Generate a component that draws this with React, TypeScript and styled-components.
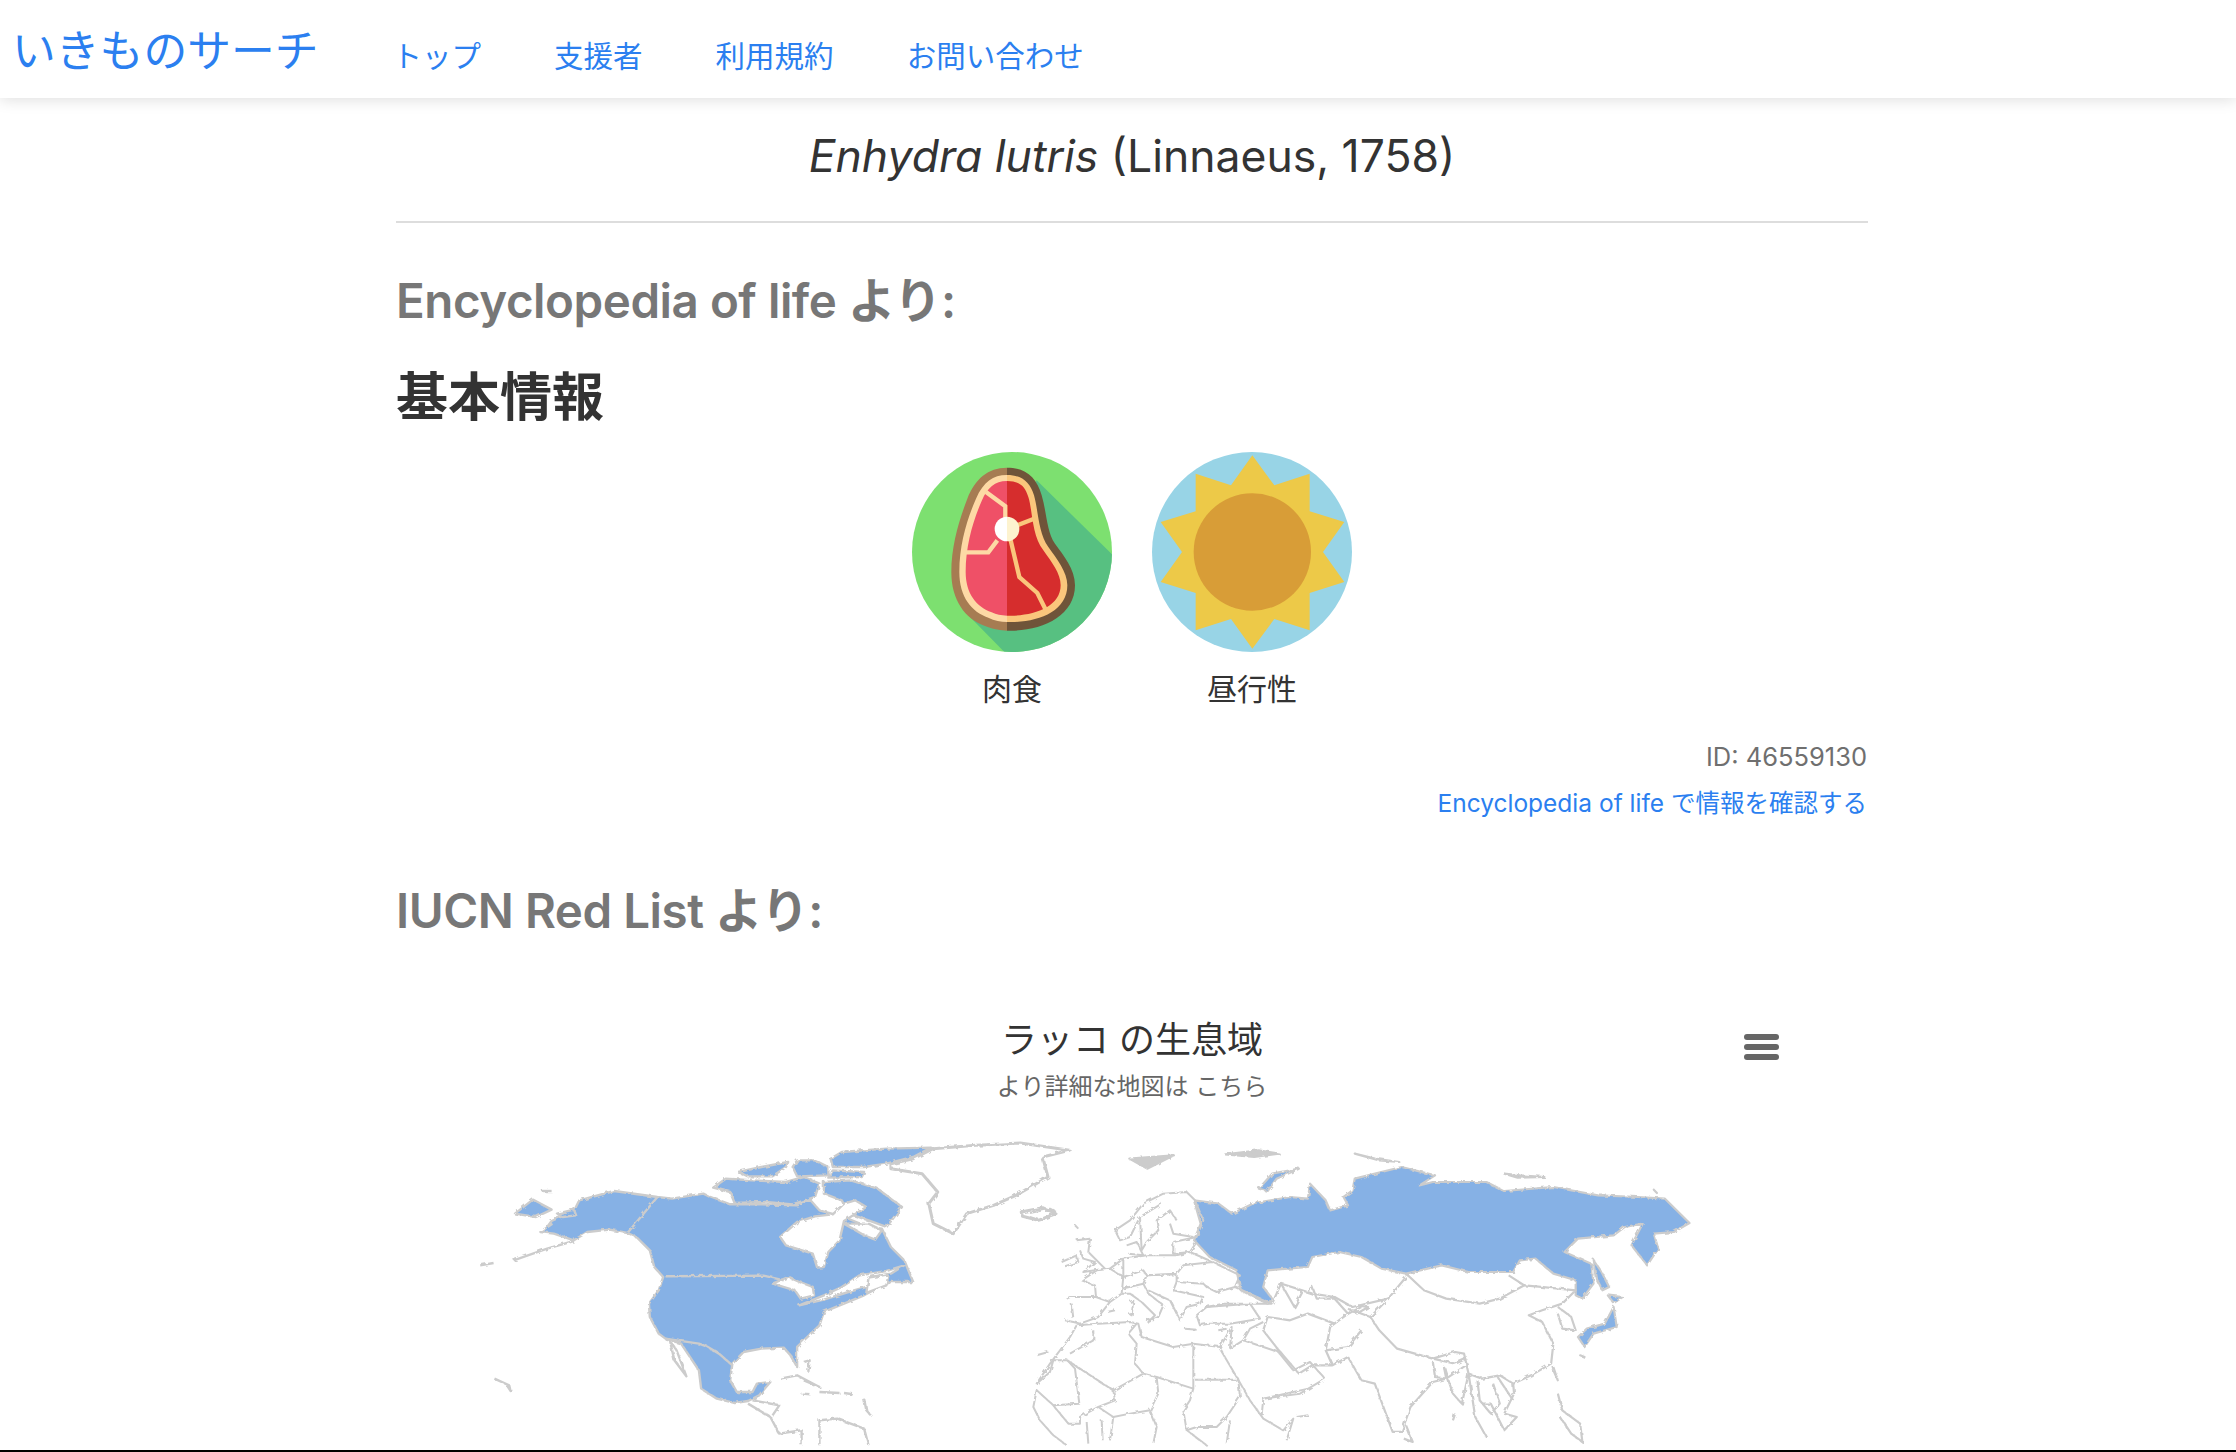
import React from 'react';
import styled, { createGlobalStyle } from 'styled-components';

const GlobalStyle = createGlobalStyle`
  html, body {
    margin: 0;
    padding: 0;
    height: 1452px;
    overflow: hidden;
    background: #fff;
    font-family: Inter, "Noto Sans CJK JP", sans-serif;
    color: #333;
  }
`;

const Page = styled.div`
  display: flex;
  flex-direction: column;
  height: 1452px;
`;

const Navbar = styled.header`
  flex: none;
  display: flex;
  align-items: center;
  height: 98px;
  padding-left: 12px;
  background: #fff;
  box-shadow: 0 2px 14px rgba(0, 0, 0, 0.13);
  position: relative;
`;

const Brand = styled.a`
  font-size: 43.8px;
  line-height: 1;
  color: #2b7ff0;
  margin: 6px 74px 0 0;
`;

const NavLink = styled.a`
  font-size: 29.5px;
  line-height: 1;
  color: #2b7ff0;
  margin: 16px 73px 0 0;
`;

const Main = styled.main`
  flex: 1;
  min-height: 0;
  overflow: hidden;
`;

const Container = styled.div`
  width: 1472px;
  margin-left: 396px;
`;

const Title = styled.h1`
  margin: 28px 0 0;
  height: 95px;
  border-bottom: 2px solid #ddd;
  box-sizing: content-box;
  text-align: center;
  font-size: 44.5px;
  line-height: 60px;
  font-weight: 400;
  color: #333;
  em { font-style: italic; }
`;

const SourceHeading = styled.h2<{ $top: number }>`
  margin: ${({ $top }) => $top}px 0 0;
  font-size: 47.5px;
  line-height: 60px;
  font-weight: 600;
  color: #777;
  letter-spacing: -0.45px;
`;

const SectionHeading = styled.h3`
  margin: 37px 0 0;
  font-size: 52px;
  line-height: 60px;
  font-weight: 600;
  color: #333;
`;

const Traits = styled.div`
  display: flex;
  justify-content: center;
  gap: 40px;
  margin: 24px 0 0 0;
`;

const Trait = styled.figure`
  margin: 0;
  width: 200px;
  display: flex;
  flex-direction: column;
  align-items: center;
  font-size: 30px;
  line-height: 40px;
  color: #333;
  svg { display: block; margin-bottom: 17px; }
`;

const Meta = styled.p`
  margin: 25px 1px 0 0;
  text-align: right;
  font-size: 25.5px;
  line-height: 46px;
  color: #6f6f6f;
`;

const MetaLink = styled.a`
  display: block;
  font-size: 24.5px;
  color: #2b7ff0;
`;

const Chart = styled.section`
  position: relative;
  margin-top: 77px;
  text-align: center;
`;

const ChartTitle = styled.div`
  font-size: 36px;
  line-height: 44px;
  color: #333;
`;

const ChartSubtitle = styled.div`
  font-size: 24px;
  line-height: 30px;
  margin-top: 10px;
  color: #666;
`;

const ChartMenu = styled.div`
  position: absolute;
  top: 16px;
  left: 1348px;
  width: 35px;
  display: flex;
  flex-direction: column;
  gap: 4px;
  span {
    display: block;
    height: 6px;
    border-radius: 3px;
    background: #666;
  }
`;

const MapFrame = styled.svg`
  display: block;
  margin-top: 25px;
  * { vector-effect: non-scaling-stroke; }
`;

const BottomLine = styled.div`
  flex: none;
  height: 2px;
  background: #000;
`;

const MeatParts = ({ rim, outer, flesh, marrow }: { rim: string; outer: string; flesh: string; marrow: string }) => (
  <g>
    <path
      fill={outer}
      d="M380 112C325 112 285 145 262 205C238 268 214 345 214 425C214 510 255 565 315 587C345 598 365 601 385 601C480 604 585 560 585 465C585 415 550 375 525 340C500 305 500 245 485 195C470 140 435 112 380 112Z"
    />
    <path
      fill={rim}
      d="M380 134C340 134 310 155 288 205C262 265 238 340 238 425C238 500 275 545 325 562C345 572 365 575 385 575C470 578 562 545 562 465C562 425 530 385 505 350C475 310 475 240 462 195C450 155 425 134 380 134Z"
    />
    <path
      fill={flesh}
      d="M380 152C345 152 322 172 306 210C280 268 257 345 257 425C257 490 290 530 335 546C350 554 365 556 385 556C460 558 542 530 542 465C542 430 515 395 490 360C455 315 458 240 445 200C435 168 420 152 380 152Z"
    />
    <g fill="none" stroke={rim} strokeWidth="13">
      <path d="M318 185L376 228V270" />
      <path d="M255 366H325L352 330" />
      <path d="M412 285L470 262" />
      <path d="M392 330L418 440L472 488L498 540" />
    </g>
    <circle cx="381" cy="296" r="37" fill={marrow} />
  </g>
);

const MeatIcon = () => (
  <svg width="200" height="200" viewBox="96 65 600 600">
    <defs>
      <clipPath id="meatDisc"><circle cx="396" cy="365" r="300" /></clipPath>
      <clipPath id="meatLeft"><rect x="96" y="65" width="285" height="600" /></clipPath>
      <clipPath id="meatRight"><rect x="381" y="65" width="315" height="600" /></clipPath>
    </defs>
    <circle cx="396" cy="365" r="300" fill="#7de070" />
    <polygon clipPath="url(#meatDisc)" fill="#57c081" points="470,150 700,376 700,670 378,670 270,560" />
    <g clipPath="url(#meatLeft)"><MeatParts outer="#a67c52" rim="#fdd9a5" flesh="#ef5067" marrow="#ffffff" /></g>
    <g clipPath="url(#meatRight)"><MeatParts outer="#6f5439" rim="#fac67c" flesh="#d62d2d" marrow="#fdf3cf" /></g>
  </svg>
);

const SunIcon = () => (
  <svg width="200" height="200" viewBox="816 65 600 600">
    <circle cx="1116" cy="365" r="300" fill="#98d4e6" />
    <polygon
      fill="#edc948"
      points="1117,75 1183,165 1289,130 1289,243 1393,275 1329,365 1393,455 1289,488 1289,600 1183,566 1117,655 1053,566 947,600 947,488 842,455 906,365 842,275 947,243 947,130 1053,165"
    />
    <circle cx="1117" cy="365" r="176" fill="#d89d37" />
  </svg>
);

// coastlines traced by hand from the reference
const americaBlue = [
  '240,330 250,312 300,282 312,250 390,222 487,240 520,245 590,230 605,240 650,262 720,262 800,265 830,250 850,280 905,300 960,330 990,335 1010,390 1040,430 1060,495 1010,495 985,510 950,535 905,560 860,585 850,625 800,690 800,750 785,715 770,692 720,695 680,705 655,740 650,790 665,825 700,825 710,800 740,795 715,835 690,852 660,858 620,845 585,815 580,760 540,680 505,665 490,650 470,600 468,560 490,520 500,480 480,450 470,400 440,360 420,348 380,338 330,345 300,370 255,350 225,345 250,322',
  '168,290 208,248 250,278 215,300',
  '262,290 300,278 305,295 275,300',
  '875,125 900,105 1000,95 1100,92 1060,120 1000,140 950,150 880,150',
  '668,165 720,150 780,135 775,150 745,178 690,178',
  '800,130 840,130 870,150 870,175 800,178 790,150',
  '612,212 640,185 700,190 775,195 815,180 850,200 840,240 790,262 730,255 660,258 650,225',
  '860,195 920,190 980,215 1035,270 1000,330 960,310 915,290 900,250 860,230',
  '880,160 950,165 945,180 870,182',
];

const americaWhite = [
  '762,360 800,315 840,298 880,292 905,260 930,250 955,270 905,312 895,370 870,405 860,450 845,452 835,410 775,385',
  '905,320 960,320 990,340 975,368 950,355',
  '745,500 780,480 805,495 835,510 838,535 808,545 795,520',
  '805,565 860,535 900,510 940,475 1000,462 1040,445 1010,470 965,480 955,510 915,525 860,548',
  '960,482 1005,472 1000,505 955,528',
  '515,670 530,700 552,778 525,730',
];

const greenland =
  '1105,95 1200,85 1300,78 1410,100 1350,120 1362,180 1290,235 1240,265 1180,290 1150,350 1105,320 1095,260 1115,225 1080,170 1010,155 1010,140 1060,125';

const americaLines = [
  '487,240 420,348',
  '505,478 725,476 770,490',
  '505,665 580,680 600,690 625,710 655,745',
  '165,430 240,395 300,372',
  '90,445 120,438',
  '690,860 740,900 760,950 810,940 810,985',
  '700,850 760,865 745,895',
  '850,985 850,910 890,905 950,935 960,985',
  '762,785 800,775 850,810 815,790',
  '810,830 830,832',
  '850,825 895,828',
  '905,828 925,832',
  '815,735 828,730 825,765',
  '950,845 955,880 965,895',
  '122,785 155,805 158,822 150,805',
  '228,222 250,222',
];

const iceland = '1302,285 1350,272 1380,290 1340,310 1305,298';

const russia = [
  '345,250 400,260 430,290 480,258 560,240 600,245 605,200 640,250 650,280 690,265 680,240 700,220 705,185 810,150 885,175 850,205 880,195 1000,195 1040,222 1150,210 1250,235 1340,240 1400,245 1455,318 1420,345 1375,350 1385,395 1360,445 1325,385 1350,320 1310,330 1285,355 1205,365 1175,405 1235,440 1240,500 1215,545 1200,535 1200,490 1150,470 1110,425 1075,430 1060,465 960,465 900,445 820,470 765,455 720,420 670,405 610,420 600,450 510,460 500,510 520,545 510,560 450,520 440,460 380,420 345,370 360,320',
  '490,215 520,170 580,155 530,185 510,222',
  '705,110 750,125 805,135 760,130',
  '1040,170 1075,175 1130,180 1070,182',
  '1238,425 1258,465 1275,510 1260,520 1245,480',
  '1272,535 1305,540 1285,558',
  '1205,660 1225,635 1265,620 1285,570 1292,630 1240,650 1220,690',
];

const eurasiaIslands = [
  '200,125 300,115 240,155',
  '415,112 490,100 535,110 480,120',
  '1375,218 1382,228',
  '1210,715 1220,720',
];

const asiaLines = [
  '820,470 860,520 910,545 985,560 1030,545 1085,505 1050,475',
  '1085,505 1200,520 1170,560 1125,580 1095,595 1125,615 1150,680 1145,740 1100,775 1060,800 1030,775 990,785 960,770 950,710 930,705 880,725 800,695 760,640 740,600 780,545 820,480',
  '1160,570 1190,600 1200,640 1170,635 1160,590',
  '1150,750 1160,790 1150,760',
  '690,720 720,790 750,800 790,945 810,945 830,870 880,795 910,785 960,740',
  '820,925 835,975 815,965',
  '960,770 975,900 1000,960',
  '1060,800 1062,830 1040,890 1068,900 1040,940 1010,860 990,860',
  '1160,830 1170,880 1210,920 1215,975 1190,950 1165,900',
  '930,890 925,910',
  '740,600 700,580 650,630 640,700 690,690 720,640',
  '640,700 655,745 610,745 580,770 535,700 500,640 510,600',
  '690,720 655,745',
  '510,600 560,610 600,590 660,620',
  '520,560 540,500 610,530 660,540 700,570 780,545',
  '540,500 570,570 590,520',
  '600,520 610,510 620,545 660,545 690,590 720,570',
  '690,575 710,590 735,570 710,565',
  '880,725 930,740 955,725',
  '880,735 885,780 910,785 905,750',
  '905,750 925,830 945,860 960,770',
  '980,790 985,850 1010,890 1030,860 1015,800',
  '1025,780 1060,850',
];

const euLines = [
  '255,130 300,100 340,50 400,20 470,15 495,40 520,100 500,150 430,165',
  '255,130 270,160 300,150 330,90 395,50',
  '330,90 335,190 350,165 385,130 380,100 420,70 440,100',
  '420,110 430,140 490,150',
  '430,165 430,200 480,195 500,165',
  '290,175 320,165 340,205 295,200',
  '140,160 180,155 175,195 225,245 160,255 195,225 160,215 150,190',
  '95,225 140,205 145,225 105,238',
  '135,115 145,125',
  '0,78 60,65 78,75 30,100 0,90',
  '240,245 280,215 350,205 440,205 480,195 548,225',
  '280,215 280,270 340,250 350,265 440,260 460,235 548,225 630,265 615,300',
  '155,280 200,250 240,245 280,270 275,320 240,345',
  '155,280 195,295 198,330',
  '110,335 120,330 198,330 240,345 205,390 150,410 130,405 105,400',
  '125,350 130,395',
  '275,305 340,290 350,265 440,262 440,285 520,290 530,300 560,315 615,300 725,350 660,350 580,350 530,360',
  '340,290 355,320 400,355 385,390 355,405 375,385 335,345 300,320 275,320',
  '440,285 430,310 520,330 510,350 470,360 450,400 420,340 355,310',
  '500,385 530,360 660,350 690,395 600,410 535,410 510,415 500,385',
  '300,345 310,340 305,385 298,380',
  '232,375 255,370',
  '345,395 372,400',
  '465,425 500,428',
  '565,430 590,425',
  '140,415 205,410 300,405 325,410 335,450 430,480 490,470 570,480 605,420 600,485',
  '140,415 120,450 60,530 20,590 60,555 70,520 112,520 250,610 340,560 380,570 490,605 490,470',
  '112,520 135,545 148,650 70,655',
  '190,430 190,460 120,500',
  '320,410 295,440 320,470 315,530 340,560',
  '250,610 255,640 205,660 150,690 150,710 115,710 70,655 20,610 10,660 30,700 70,745 110,775',
  '380,570 385,620 360,670 380,720 370,770',
  '490,605 480,640 460,670 470,730 500,720 560,720 590,690 630,630 625,578 495,578',
  '570,485 620,570 660,640 700,695 760,730 790,695 770,760',
  '205,660 250,690 300,680 360,670',
  '250,690 240,760',
  '170,705 175,770',
  '215,700 218,760',
  '600,485 640,460 745,495 790,550 840,525 885,575 835,605 700,635 695,685',
  '640,460 660,425 700,405',
  '835,605 810,620 700,635',
  '470,730 530,775',
  '600,700 590,770',
  '800,690 835,685',
  '20,505 55,495',
];

const WorldMap = () => (
  <MapFrame width="1472" height="320" viewBox="396 1130 1472 320">
    <defs>
      {/* the reference's coast is low-res and jagged, this roughens the traced lines */}
      <filter id="rough" filterUnits="userSpaceOnUse" x="396" y="1130" width="1472" height="320">
        <feTurbulence type="fractalNoise" baseFrequency="0.2" numOctaves="2" seed="3" />
        <feDisplacementMap in="SourceGraphic" scale="3.5" />
      </filter>
    </defs>
    <g filter="url(#rough)">
      <g
        transform="translate(440 1120) scale(0.4464 0.3333)"
        fill="#86b1e5"
        stroke="#cccccc"
        strokeWidth="2.4"
        strokeLinejoin="round"
      >
        {americaBlue.map((p) => <polygon key={p} points={p} />)}
        {americaWhite.map((p) => <polygon key={p} points={p} fill="#fff" />)}
        <polygon points={greenland} fill="#fff" strokeWidth="3" />
        <polygon points={iceland} fill="#fff" strokeWidth="3" />
        {americaLines.map((p) => <polyline key={p} points={p} fill="none" />)}
      </g>
      <g
        transform="translate(1040 1120) scale(0.4464 0.3333)"
        fill="#86b1e5"
        stroke="#cccccc"
        strokeWidth="2.2"
        strokeLinejoin="round"
      >
        {russia.map((p) => <polygon key={p} points={p} />)}
        {eurasiaIslands.map((p) => <polygon key={p} points={p} fill="#ccc" />)}
        {asiaLines.map((p) => <polyline key={p} points={p} fill="none" />)}
      </g>
      <g
        transform="translate(1030 1190) scale(0.3333)"
        fill="none"
        stroke="#cccccc"
        strokeWidth="2"
        strokeLinejoin="round"
      >
        {euLines.map((p) => <polyline key={p} points={p} />)}
      </g>
    </g>
  </MapFrame>
);

const App: React.FC = () => (
  <Page>
    <GlobalStyle />
    <Navbar>
      <Brand>いきものサーチ</Brand>
      <NavLink>トップ</NavLink>
      <NavLink>支援者</NavLink>
      <NavLink>利用規約</NavLink>
      <NavLink>お問い合わせ</NavLink>
    </Navbar>
    <Main>
      <Container>
        <Title>
          <em>Enhydra lutris</em> (Linnaeus, 1758)
        </Title>
        <SourceHeading $top={48}>Encyclopedia of life より:</SourceHeading>
        <SectionHeading>基本情報</SectionHeading>
        <Traits>
          <Trait>
            <MeatIcon />
            <figcaption>肉食</figcaption>
          </Trait>
          <Trait>
            <SunIcon />
            <figcaption>昼行性</figcaption>
          </Trait>
        </Traits>
        <Meta>
          ID: 46559130
          <MetaLink>Encyclopedia of life で情報を確認する</MetaLink>
        </Meta>
        <SourceHeading $top={55}>IUCN Red List より:</SourceHeading>
        <Chart>
          <ChartTitle>ラッコ の生息域</ChartTitle>
          <ChartSubtitle>より詳細な地図は こちら</ChartSubtitle>
          <ChartMenu>
            <span />
            <span />
            <span />
          </ChartMenu>
          <WorldMap />
        </Chart>
      </Container>
    </Main>
    <BottomLine />
  </Page>
);

export default App;
